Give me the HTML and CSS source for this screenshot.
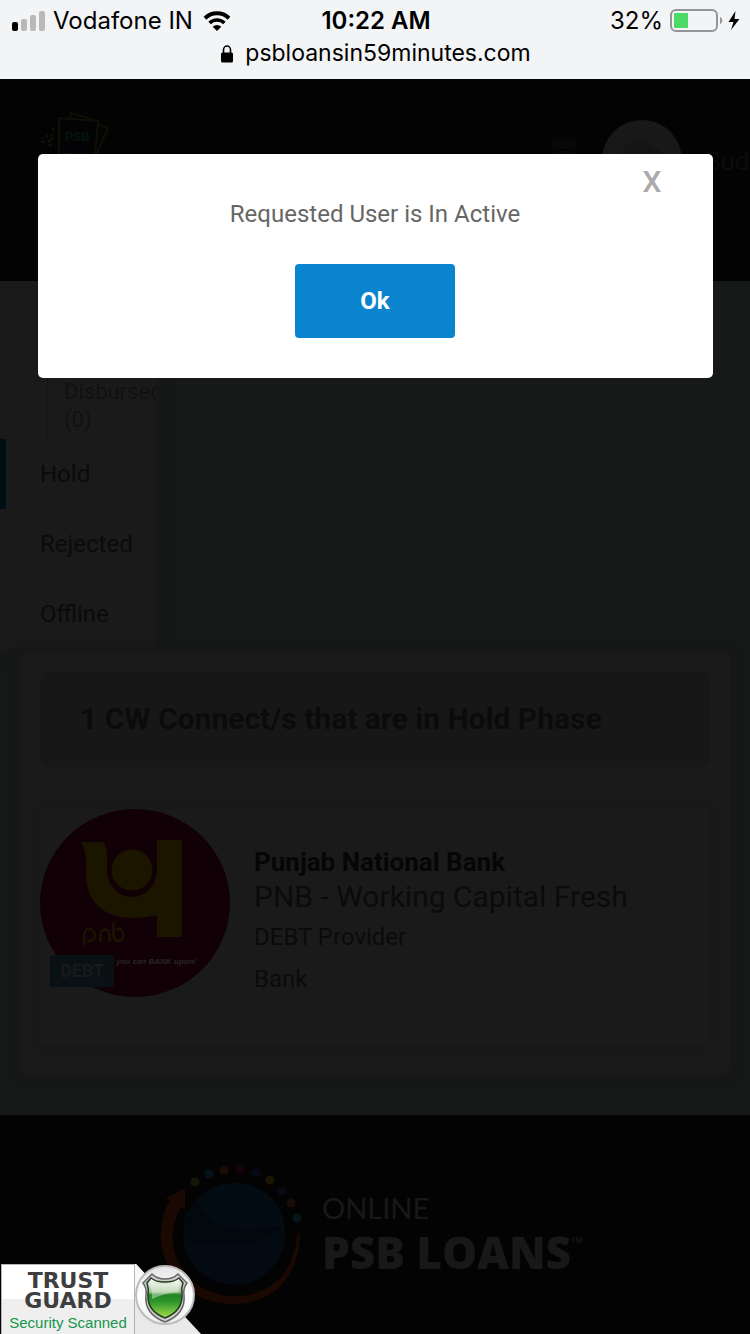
FILE: index.html
```html
<!DOCTYPE html>
<html lang="en">
<head>
<meta charset="utf-8">
<meta name="viewport" content="width=device-width, initial-scale=1">
<title>PSB Loans in 59 Minutes</title>
<link rel="stylesheet" href="styles.css">
</head>
<body>
<div class="browser-bar">
  <div class="status">
    <div class="status-side">
      <svg class="signal" width="34" height="20" viewBox="0 0 34 20" aria-hidden="true">
        <rect x="0" y="11" width="6" height="9" rx="2" fill="#000"/>
        <rect x="9" y="8" width="6" height="12" rx="2" fill="#b9b9ba"/>
        <rect x="18" y="4" width="6" height="16" rx="2" fill="#b9b9ba"/>
        <rect x="27" y="0" width="6" height="20" rx="2" fill="#b9b9ba"/>
      </svg>
      <span>Vodafone IN</span>
      <svg class="wifi" width="28" height="20" viewBox="0 0 28 20" aria-hidden="true">
        <path d="M2 7.2a17.3 17.3 0 0 1 24 0" fill="none" stroke="#000" stroke-width="4"/>
        <path d="M6.600 12a10.600 10.600 0 0 1 14.800 0" fill="none" stroke="#000" stroke-width="3.600"/>
        <path d="M14 20l-4.300-4.300a6.200 6.200 0 0 1 8.600 0z"/>
      </svg>
    </div>
    <span class="clock">10:22 AM</span>
    <div class="status-side status-end">
      <span>32%</span>
      <svg width="70" height="24" viewBox="0 0 70 24" aria-hidden="true">
        <rect x="1" y="1" width="46" height="21" rx="5" fill="none" stroke="#949598" stroke-width="2"/>
        <rect x="4" y="4" width="14" height="15" rx="1" fill="#4cd964"/>
        <path d="M50 8c3 1 3 6 0 7z" fill="#949598"/>
        <path d="M65.500 2l-7 11h5l-2.500 8 8.500-11h-5z" fill="#000"/>
      </svg>
    </div>
  </div>
  <div class="address">
    <svg width="12" height="18" viewBox="0 0 12 18" aria-hidden="true">
      <path d="M2.500 9V5a3.500 4 0 0 1 7 0v4" fill="none" stroke="#000" stroke-width="1.600"/>
      <rect x="0" y="7.500" width="12" height="10" rx="1.500"/>
    </svg>
    <span>psbloansin59minutes.com</span>
  </div>
</div>

<div class="page">
  <header class="topbar">
    <svg class="brand" width="72" height="60" viewBox="0 0 72 60" role="img" aria-label="PSB Loans in 59 Minutes">
      <g fill="none" stroke="#0c1006" stroke-width="2">
        <path d="M19 56V7l39 3-4 46z"/>
        <path d="M30 7l1-5 27 8M58 13l10 4-14 32"/>
      </g>
      <g fill="#12110a">
        <circle cx="13" cy="18" r="1.600"/><circle cx="7" cy="25" r="1.600"/><circle cx="12" cy="24" r="1.300"/>
        <circle cx="3" cy="31" r="1.300"/><circle cx="9" cy="30" r="1.500"/><circle cx="12" cy="28" r="1.400"/>
        <circle cx="10" cy="34" r="1.800"/><circle cx="3" cy="27" r="1"/>
      </g>
      <text class="brand-psb" x="25" y="30">PSB</text>
      <text class="brand-loans" x="19" y="39">LOANS</text>
      <text class="brand-59" x="22" y="57">59</text>
    </svg>
    <svg class="menu" width="24" height="34" viewBox="0 0 24 34" aria-hidden="true">
      <rect width="24" height="10" rx="3"/><rect y="12" width="24" height="9" rx="3"/><rect y="23" width="24" height="9" rx="3"/>
    </svg>
    <svg class="avatar" width="80" height="80" viewBox="0 0 80 80" aria-hidden="true">
      <circle cx="40" cy="40" r="40" fill="#181818"/>
      <ellipse cx="37" cy="34" rx="17" ry="14" fill="#151515"/>
      <circle cx="51" cy="38" r="10" fill="#141414"/>
    </svg>
    <span class="user">Suds</span>
  </header>

  <main class="content">
    <nav class="sidebar" aria-label="Loan phases">
      <a class="sub-item" href="#disbursed">Disbursed<br>(0)</a>
      <a class="item item-active" href="#hold">Hold</a>
      <a class="item" href="#rejected">Rejected</a>
      <a class="item" href="#offline">Offline</a>
    </nav>

    <section class="panel">
      <h1 class="panel-title">1 CW Connect/s that are in Hold Phase</h1>
      <article class="loan">
        <div class="loan-logo">
          <svg width="190" height="190" viewBox="0 0 190 190" role="img" aria-label="Punjab National Bank">
            <ellipse cx="95" cy="94" rx="95" ry="94" fill="#110006"/>
            <path d="M41 33h22q4 5 4 15v12c0 16 11 28 25 28s25-12 25-28V31h25v97h-25v-22q-10 3-25 3c-28 0-46-17-46-43V55q0-15-5-22z" fill="#1b1500"/>
            <circle cx="92" cy="61" r="20.500" fill="#1b1500"/>
            <g fill="none" stroke="#1b1500" stroke-width="2.400">
              <path d="M44 136v-10a5.500 6 0 1 1 5.500 6h-2.500"/>
              <path d="M60.500 133v-7a4.500 5.500 0 0 1 9 0v7"/>
              <path d="M73.500 114v12a5 6 0 1 0 5-6h-2"/>
            </g>
            <text class="logo-slogan" x="76" y="155">you can BANK upon!</text>
          </svg>
          <span class="tag">DEBT</span>
        </div>
        <div class="loan-text">
          <h2 class="bank">Punjab National Bank</h2>
          <p class="product">PNB - Working Capital Fresh</p>
          <p class="detail">DEBT Provider</p>
          <p class="detail">Bank</p>
        </div>
      </article>
    </section>
  </main>

  <footer class="footer">
    <svg width="144" height="144" viewBox="0 0 144 144" aria-hidden="true">
      <circle cx="74" cy="69" r="51" fill="#030a11"/>
      <path d="M23 60C32 35 50 18 76 18c28 0 49 22 49 50-18 14-82 4-99-22z" fill="#030b13"/>
      <path d="M23 72c22 12 76 12 98-10-14-2-68 14-85-27q-14 16-13 37z" fill="#02080e"/>
      <path d="M5 34l20-11v21l-4-2C14 55 12 66 13 78c4 32 29 53 62 53 35 0 60-23 62-63h3c0 43-27 71-66 71C34 139 5 113 1 77 0 62 3 47 10 35z" fill="#1a0902"/>
      <g>
        <circle cx="35" cy="17" r="4.500" fill="#141605"/><circle cx="49" cy="9" r="4.500" fill="#03131a"/>
        <circle cx="64" cy="5" r="4.500" fill="#1a0b03"/><circle cx="80" cy="4.500" r="4.500" fill="#16030c"/>
        <circle cx="96" cy="8" r="4.500" fill="#060a17"/><circle cx="110" cy="15" r="4.500" fill="#191603"/>
        <circle cx="122" cy="26" r="4.500" fill="#0d0613"/><circle cx="131" cy="38" r="4.500" fill="#1a0c06"/>
        <circle cx="137" cy="53" r="4.500" fill="#031519"/>
      </g>
    </svg>
    <div class="footer-name">
      <span class="footer-online">ONLINE</span>
      <span class="footer-psb">PSB LOANS<sup>™</sup></span>
    </div>
  </footer>

  <div class="modal" role="dialog" aria-modal="true" aria-labelledby="message">
    <button class="close" type="button" aria-label="Close">X</button>
    <p class="message" id="message">Requested User is In Active</p>
    <button class="ok" type="button">Ok</button>
  </div>
</div>

<a class="trust" href="#trust-guard">
  <span class="trust-text">
    <span class="trust-word">TRUST</span>
    <span class="trust-word">GUARD</span>
    <span class="trust-note">Security Scanned</span>
  </span>
  <svg class="trust-shield" width="66" height="70" viewBox="0 0 66 70" aria-hidden="true">
    <defs>
      <linearGradient id="disc" x1="0" y1="0" x2="0" y2="1"><stop offset="0" stop-color="#e4e4e4"/><stop offset=".5" stop-color="#fff"/><stop offset="1" stop-color="#eee"/></linearGradient>
      <linearGradient id="green" x1="0" y1="0" x2="0" y2="1"><stop offset="0" stop-color="#fff"/><stop offset=".35" stop-color="#9bc08d"/><stop offset=".42" stop-color="#228522"/><stop offset=".6" stop-color="#2f962b"/><stop offset="1" stop-color="#a5e04b"/></linearGradient>
    </defs>
    <path d="M0 0h1l65 70H0z" fill="#e9e9e9"/>
    <path d="M0 0h1l22 24L0 36z" fill="#f8f8f8"/>
    <circle cx="30" cy="31" r="29" fill="url(#disc)" stroke="#bcbcbc" stroke-width="2"/>
    <path d="M30 15q8 0 13-5l9 9q-4 5-3 12 2 19-19 27Q9 50 11 31q1-7-3-12l9-9q5 5 13 5z" fill="#cfcfcf" stroke="#666" stroke-width="1.500"/>
    <path d="M30 18q9 0 14-4l4 5q-2 5-1 11 1 17-17 24Q12 47 13 31q1-6-1-12l4-5q5 4 14 4z" fill="url(#green)" stroke="#263b22" stroke-width="1.500"/>
    <path d="M16 18q7 3 14 2 8 0 13-3l2 3q-1 5-2 8-13 1-26 7 0-8-2-14z" fill="#fff" opacity=".4"/>
  </svg>
</a>
</body>
</html>
```
FILE: styles.css
```css
* {
  box-sizing: border-box;
}

body {
  margin: 0;
  min-height: 100vh;
  display: flex;
  flex-direction: column;
  background: #030303;
  font-family: Roboto, "Liberation Sans", sans-serif;
}

h1,
h2,
p {
  margin: 0;
}

a {
  color: inherit;
  text-decoration: none;
}

button {
  border: 0;
  padding: 0;
  font-family: inherit;
}

svg {
  display: block;
  flex: none;
}

/* Browser chrome */
.browser-bar {
  height: 79px;
  padding: 4px 10px 0 12px;
  background: #f3f4f6;
  color: #000;
  font-family: Inter, "Liberation Sans", sans-serif;
  font-size: 24px;
  line-height: 33px;
}

.status {
  display: grid;
  grid-template-columns: 1fr auto 1fr;
  align-items: center;
}

.status-side {
  display: flex;
  align-items: center;
  gap: 7px;
}

.status-end {
  justify-content: flex-end;
}

.wifi {
  margin-left: 3px;
}

.clock {
  font-weight: 600;
}

.address {
  display: flex;
  justify-content: center;
  align-items: center;
  gap: 12px;
  font-size: 23px;
}

/* Page behind the dialog */
.page {
  position: relative;
  flex: 1;
  display: flex;
  flex-direction: column;
  overflow: hidden;
}

.topbar {
  display: flex;
  align-items: flex-start;
  height: 202px;
  padding: 32px 0 0 40px;
  background: #030303;
}

.brand-psb {
  font: 700 12px "Liberation Sans", sans-serif;
  fill: #03160b;
}

.brand-loans {
  font: 700 9px "Liberation Sans", sans-serif;
  fill: #04040f;
}

.brand-59 {
  font: 700 22px "Liberation Sans", sans-serif;
  fill: #190d03;
}

.menu {
  margin: 28px 26px 0 auto;
  fill: #070707;
}

.avatar {
  margin-top: 9px;
}

.user {
  width: 45px;
  margin: 34px 0 0 23px;
  overflow: hidden;
  color: #0b0b10;
  font-size: 26px;
  line-height: 32px;
}

.content {
  padding-bottom: 40px;
  overflow: hidden;
  background: #161918;
}

.sidebar {
  width: 156px;
  padding-top: 97px;
  overflow: hidden;
  background: #1a1a1a;
  color: #0b0b0b;
  box-shadow: 0 0 10px 5px #181818;
}

.sub-item {
  display: block;
  height: 61px;
  margin-left: 47px;
  padding-left: 16px;
  border-left: 1px solid #161616;
  color: #111;
  font-size: 22px;
  line-height: 28px;
}

.item {
  display: block;
  padding-left: 34px;
  border-left: 6px solid transparent;
  font-size: 24px;
  line-height: 70px;
}

.item-active {
  border-left-color: #000d15;
}

.panel {
  position: relative;
  margin: 2px 20px 0;
  padding: 20px 20px 30px;
  border-radius: 10px;
  background: #1a1a1a;
  box-shadow: 0 0 10px 5px #171717;
}

.panel-title {
  padding: 0 40px;
  border-radius: 10px;
  background: #171717;
  color: #0b0b0b;
  font-size: 30px;
  line-height: 96px;
}

.loan {
  display: flex;
  gap: 24px;
  min-height: 236px;
  margin-top: 42px;
  border-radius: 4px;
  box-shadow: 0 0 8px 2px #181818;
}

.loan-logo {
  position: relative;
}

.logo-slogan {
  font: italic 700 8px "Liberation Sans", sans-serif;
  fill: #2a2527;
}

.tag {
  position: absolute;
  left: 10px;
  top: 146px;
  padding: 0 10px;
  border-radius: 3px;
  background: #091114;
  color: #17191a;
  font-size: 18px;
  font-weight: 700;
  line-height: 32px;
}

.loan-text {
  padding-top: 37px;
  color: #0b0b0b;
}

.bank {
  color: #060606;
  font-size: 26px;
  line-height: 32px;
}

.product {
  font-size: 30px;
  line-height: 38px;
}

.detail {
  font-size: 24px;
  line-height: 42px;
}

.footer {
  flex: 1;
  display: flex;
  align-items: flex-start;
  gap: 18px;
  padding: 50px 40px 0 160px;
  background: #030303;
}

.footer-name {
  display: flex;
  flex-direction: column;
  padding-top: 26px;
  color: #181818;
}

.footer-online {
  font-family: Lato, sans-serif;
  font-size: 29px;
  line-height: 34px;
}

.footer-psb {
  font-family: "Open Sans", sans-serif;
  font-size: 44px;
  font-weight: 800;
  line-height: 54px;
}

.footer-psb sup {
  font-size: 16px;
  font-weight: 400;
  line-height: 0;
  vertical-align: 20px;
}

/* Dialog */
.modal {
  position: absolute;
  top: 75px;
  left: 5%;
  right: 5%;
  display: flex;
  flex-direction: column;
  align-items: center;
  padding: 42px 40px 40px;
  border-radius: 5px;
  background: #fff;
}

.close {
  position: absolute;
  top: 10px;
  right: 51px;
  background: none;
  color: #aaa;
  font-size: 30px;
  font-weight: 500;
  line-height: 36px;
}

.message {
  color: #666;
  font-size: 24px;
  line-height: 36px;
}

.ok {
  width: 160px;
  margin-top: 32px;
  border-radius: 4px;
  background: #0a84cf;
  color: #fff;
  font-size: 24px;
  font-weight: 700;
  line-height: 74px;
}

/* Security seal */
.trust {
  position: fixed;
  left: 1px;
  bottom: 0;
  display: flex;
}

.trust-text {
  display: flex;
  flex-direction: column;
  width: 134px;
  height: 70px;
  padding: 6px 4px 0 4px;
  border: 1px solid #b5b5b5;
  border-bottom: 0;
  background: linear-gradient(#fff 50%, #efefef 50%);
  text-align: center;
}

.trust-word {
  color: #3e3e40;
  font: 700 22px/20px "DejaVu Sans", sans-serif;
}

.trust-note {
  color: #15964a;
  font: 15px/24px "Liberation Sans", sans-serif;
}
```
